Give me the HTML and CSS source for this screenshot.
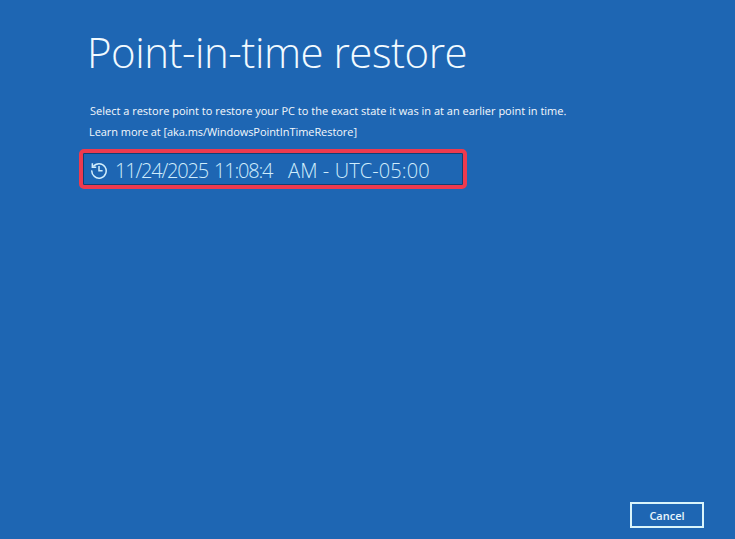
FILE: index.html
```html
<!DOCTYPE html>
<html>
<head>
    <title>Point-in-time restore</title>
    <link rel="stylesheet" href="styles.css">
</head>
<body>
    <div id="container">
        <div id="content">
            <h1 class="title">Point-in-time restore</h1>
            <p class="intro">Select a restore point to restore your PC to the exact state it was in at an earlier point in time.</p>
            <p class="learn">Learn more at [aka.ms/WindowsPointInTimeRestore]</p>
            <div class="restore-row">
                <svg class="history-icon" viewBox="0 0 20 20" width="18" height="18">
                    <path d="M3.6 6.2A8 8 0 1 1 2 10.4" fill="none" stroke="currentColor" stroke-width="1.7"/>
                    <path d="M2.6 2.6V6.9H6.9" fill="none" stroke="currentColor" stroke-width="1.7"/>
                    <path d="M10 5.5V10.8H14" fill="none" stroke="currentColor" stroke-width="1.7"/>
                </svg>
                <span class="restore-label"><span class="restore-date">11/24/2025 11:08:4</span>&nbsp;&nbsp; AM - UTC-05:00</span>
                <div class="highlight"></div>
            </div>
        </div>
        <div id="footer">
            <button class="cancel">Cancel</button>
        </div>
    </div>
</body>
</html>
```

FILE: styles.css
```css
body {
    margin: 0;
    overflow: hidden;
    background-color: #1e66b3;
    font-family: "Open Sans", "Noto Sans", Arial, sans-serif;
    color: white;
}
#container {
    width: 735px;
    height: 539px;
    display: flex;
    flex-direction: column;
}
#content {
    flex: 1;
    padding: 24px 0 0 87px;
}
.title {
    margin: 0;
    font-size: 42px;
    line-height: 56px;
    font-weight: 300;
    letter-spacing: -0.5px;
    color: #f2faff;
}
.intro {
    margin: 23px 0 0 3px;
    font-size: 11px;
    line-height: 18px;
    text-rendering: geometricPrecision;
    color: #f4f8fc;
}
.learn {
    margin: 2px 0 0 2px;
    font-size: 11px;
    line-height: 18px;
    letter-spacing: -0.06px;
    color: #f4f8fc;
}
.restore-row {
    position: relative;
    width: 373px;
    height: 30px;
    margin: 12px 0 0 -4px;
    padding: 2px 0 0 7px;
    display: flex;
    align-items: center;
    gap: 7px;
    color: #d0edfc;
}
.history-icon {
    flex: none;
}
.restore-label {
    font-size: 20px;
    font-weight: 300;
    letter-spacing: 0.1px;
    white-space: nowrap;
}
.restore-date {
    letter-spacing: -1.2px;
    word-spacing: 2px;
}
.highlight {
    position: absolute;
    inset: -4px;
    border: 4px solid #ef3a4e;
    border-radius: 5px;
    box-shadow: inset 0 0 0 1px #123f73;
}
#footer {
    display: flex;
    justify-content: flex-end;
    padding: 0 31px 11px 0;
}
.cancel {
    width: 74px;
    height: 26px;
    padding: 0;
    background: transparent;
    border: 2px solid #d9f4fb;
    color: #e9f6fc;
    font-family: inherit;
    font-size: 11px;
    font-weight: 600;
}
```
